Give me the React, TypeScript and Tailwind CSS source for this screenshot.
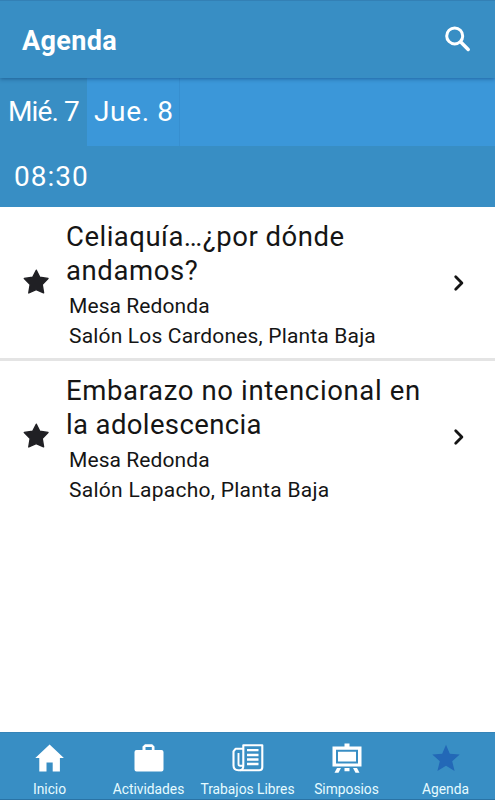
import type { ReactNode } from "react";

type Line = { text: string; tracking: string };
type Session = { title: Line[]; details: Line[] };

const sessions: Session[] = [
  {
    title: [
      { text: "Celiaquía…¿por dónde", tracking: "tracking-[0.5px]" },
      { text: "andamos?", tracking: "tracking-[0.6px]" },
    ],
    details: [
      { text: "Mesa Redonda", tracking: "tracking-[0.08px]" },
      { text: "Salón Los Cardones, Planta Baja", tracking: "tracking-[0.17px]" },
    ],
  },
  {
    title: [
      { text: "Embarazo no intencional en", tracking: "tracking-[0.63px]" },
      { text: "la adolescencia", tracking: "tracking-[0.37px]" },
    ],
    details: [
      { text: "Mesa Redonda", tracking: "tracking-[0.08px]" },
      { text: "Salón Lapacho, Planta Baja", tracking: "tracking-[0.27px]" },
    ],
  },
];

function Star({ className }: { className: string }) {
  return (
    <svg viewBox="0 0 26 25" className={className} fill="currentColor" stroke="currentColor" strokeWidth="1.4" strokeLinejoin="round">
      <path d="M13.3 1.2 16.8 8.3 25 9.4 19.2 15.4 20.6 23.9 13.2 20.6 5.8 23.9 7.2 15.4 1.3 9.4 9.7 8.3Z" />
    </svg>
  );
}

function SessionRow({ session }: { session: Session }) {
  return (
    <div className="flex h-[154px] items-start border-b-[3px] border-[#e4e4e4] pt-[12.5px] last:border-transparent">
      <Star className="mt-[49px] ml-[23px] h-[25px] w-[26px] shrink-0 text-[#202024]" />
      <div className="ml-[17px] w-[385px] shrink-0 whitespace-nowrap text-[#151515]">
        {session.title.map((l) => (
          <div key={l.text} className={`text-[27.5px] leading-[34.5px] ${l.tracking}`}>{l.text}</div>
        ))}
        <div className="pt-[2.6px] pl-[3px]">
          {session.details.map((l) => (
            <div key={l.text} className={`text-[21px] leading-[30.3px] ${l.tracking}`}>{l.text}</div>
          ))}
        </div>
      </div>
      <svg viewBox="0 0 12 18" className="mt-[54px] ml-[2px] h-[18px] w-3 shrink-0" fill="none" stroke="#151515" strokeWidth="2.8" strokeLinecap="round" strokeLinejoin="round">
        <path d="m2.7 2.8 6.2 6.2-6.2 6.2" />
      </svg>
    </div>
  );
}

function Tab({ label, children, tracking }: { label: string; children: ReactNode; tracking: string }) {
  return (
    <div className="flex w-[99px] flex-col items-center pt-[10px]">
      <svg viewBox="0 0 34 32" className="h-8 w-[34px]" fill="none">{children}</svg>
      <div className={`mt-[5px] whitespace-nowrap text-[13.8px] leading-[18px] text-[#e6fbff] ${tracking}`}>{label}</div>
    </div>
  );
}

export default function App() {
  return (
    <div className="flex h-[800px] w-[495px] flex-col overflow-hidden bg-white font-[Roboto,sans-serif]">
      <header className="z-10 flex h-[78px] shrink-0 items-center justify-between border-t border-[#3380b5] bg-[#388ec4] pr-[20px] pl-[22px] shadow-[0_1px_4px_rgba(0,40,90,0.45)]">
        <h1 className="mt-[3px] text-[27px] font-bold tracking-[0.35px] text-white">Agenda</h1>
        <svg viewBox="0 0 32 32" className="h-8 w-8" fill="none" stroke="white" strokeWidth="3" strokeLinecap="round">
          <circle cx="11.7" cy="11.9" r="8" />
          <path d="m18 18.2 7.2 7.2" strokeWidth="3.5" />
        </svg>
      </header>
      <nav className="flex h-[68px] shrink-0 bg-[#3b97d9] text-[28px] text-white">
        <div className="flex w-[87px] items-center bg-[#388ec4] pl-2 whitespace-nowrap tracking-[-0.9px]">Mié. 7</div>
        <div className="flex w-[93px] items-center border-r border-[#378fd0] pl-[7px] whitespace-nowrap tracking-[0.65px]">Jue. 8</div>
      </nav>
      <div className="flex h-[61px] shrink-0 items-center bg-[#388ec4] pl-[14px] text-[28px] tracking-[1px] text-white">08:30</div>
      <main className="flex-1">
        {sessions.map((s) => <SessionRow key={s.title[0].text} session={s} />)}
      </main>
      <footer className="flex h-[68px] shrink-0 border-t border-b border-t-[#3584b8] border-b-[#2a73a5] bg-[#388ec4]">
        <Tab label="Inicio" tracking="tracking-[0px]">
          <path fill="white" d="M16.6 1.5 30.9 15h-4v13.5h-7.2v-9h-6.2v9H6.3V15h-4Z" />
        </Tab>
        <Tab label="Actividades" tracking="tracking-[0px]">
          <path fill="white" fillRule="evenodd" d="M13 1.2h7.2L22.5 3.5V7h7a2 2 0 0 1 2 2v17.5a2 2 0 0 1-2 2h-25a2 2 0 0 1-2-2V9a2 2 0 0 1 2-2h6V3.5Zm.5 2.8v3h6.3V4Z" />
        </Tab>
        <Tab label="Trabajos Libres" tracking="tracking-[0px]">
          <g stroke="white" strokeWidth="2.1" strokeLinejoin="round">
            <path d="M12.3 2.3H31.3V24.2Q31.3 27.2 28.3 27.2H7.3Q2.5 27.2 2.5 22.5V8.3L4.5 5.8H12.3Z" />
            <path d="M12.3 5.8V22.8Q12.3 27.2 9 27.2" />
            <path d="M7.5 10V21Q7.5 22.8 9.2 22.8H12" strokeWidth="1.9" />
            <path d="M16 7.2h11.5M16 12h11.5M16 16.5h11.5M16 21h11.5" strokeWidth="2.3" />
          </g>
        </Tab>
        <Tab label="Simposios" tracking="tracking-[0px]">
          <path fill="white" fillRule="evenodd" d="M14.5.5h5v3h12v20h-29v-20h12Zm-8.5 6.2v13.8h22V6.7ZM8 8.8h18V18.4H8Z" />
          <path fill="white" d="m7 25-2.5 4.7h4L11 25Zm7.5 0h5v3.2h-5Zm8.5 0 2.5 4.7h4L27 25Z" />
        </Tab>
        <Tab label="Agenda" tracking="tracking-[0px]">
          <path fill="#2368b7" d="m17 1.8 3.8 8.9 9.9.9-7.5 6.6 2.4 9.8-8.6-5.2L8.4 28l2.4-9.8-7.5-6.6 9.9-.9Z" />
        </Tab>
      </footer>
    </div>
  );
}
